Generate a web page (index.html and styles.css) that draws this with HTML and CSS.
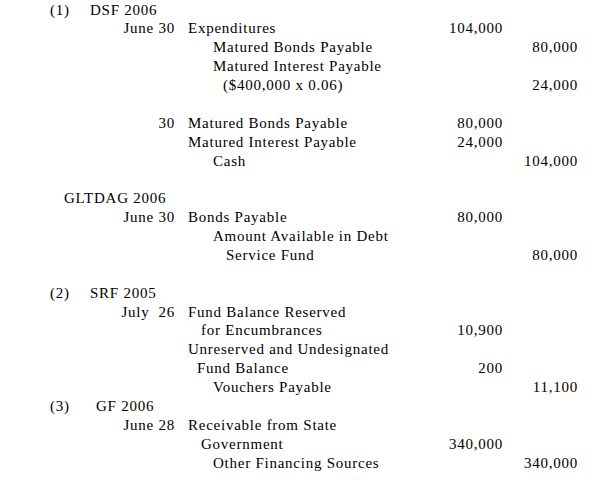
FILE: index.html
```html
<!DOCTYPE html>
<html>
<head>
<meta charset="utf-8">
<link rel="stylesheet" href="styles.css">
</head>
<body>
<div class="journal">
  <div class="head"><span class="no">(1)</span><span class="title">DSF 2006</span></div>
  <div class="row"><span class="date">June 30</span><span class="acct">Expenditures</span><span class="dr">104,000</span><span class="cr"></span></div>
  <div class="row"><span class="date"></span><span class="acct i2">Matured Bonds Payable</span><span class="dr"></span><span class="cr">80,000</span></div>
  <div class="row"><span class="date"></span><span class="acct i2">Matured Interest Payable</span><span class="dr"></span><span class="cr"></span></div>
  <div class="row"><span class="date"></span><span class="acct i2b">($400,000 x 0.06)</span><span class="dr"></span><span class="cr">24,000</span></div>
  <div class="blank"></div>
  <div class="row"><span class="date">30</span><span class="acct">Matured Bonds Payable</span><span class="dr">80,000</span><span class="cr"></span></div>
  <div class="row"><span class="date"></span><span class="acct">Matured Interest Payable</span><span class="dr">24,000</span><span class="cr"></span></div>
  <div class="row"><span class="date"></span><span class="acct i2">Cash</span><span class="dr"></span><span class="cr">104,000</span></div>
  <div class="blank"></div>
  <div class="head"><span class="title wide">GLTDAG 2006</span></div>
  <div class="row"><span class="date">June 30</span><span class="acct">Bonds Payable</span><span class="dr">80,000</span><span class="cr"></span></div>
  <div class="row"><span class="date"></span><span class="acct i2">Amount Available in Debt</span><span class="dr"></span><span class="cr"></span></div>
  <div class="row"><span class="date"></span><span class="acct i3">Service Fund</span><span class="dr"></span><span class="cr">80,000</span></div>
  <div class="blank"></div>
  <div class="head"><span class="no">(2)</span><span class="title">SRF 2005</span></div>
  <div class="row"><span class="date">July&nbsp;&nbsp;26</span><span class="acct">Fund Balance Reserved</span><span class="dr"></span><span class="cr"></span></div>
  <div class="row"><span class="date"></span><span class="acct i1">for Encumbrances</span><span class="dr">10,900</span><span class="cr"></span></div>
  <div class="row"><span class="date"></span><span class="acct">Unreserved and Undesignated</span><span class="dr"></span><span class="cr"></span></div>
  <div class="row"><span class="date"></span><span class="acct i1a">Fund Balance</span><span class="dr">200</span><span class="cr"></span></div>
  <div class="row"><span class="date"></span><span class="acct i2">Vouchers Payable</span><span class="dr"></span><span class="cr">11,100</span></div>
  <div class="head"><span class="no">(3)</span><span class="title shift">GF 2006</span></div>
  <div class="row"><span class="date">June 28</span><span class="acct">Receivable from State</span><span class="dr"></span><span class="cr"></span></div>
  <div class="row"><span class="date"></span><span class="acct i1">Government</span><span class="dr">340,000</span><span class="cr"></span></div>
  <div class="row"><span class="date"></span><span class="acct i2">Other Financing Sources</span><span class="dr"></span><span class="cr">340,000</span></div>
</div>
</body>
</html>
```
FILE: styles.css
```css
html, body {
  margin: 0;
  padding: 0;
  background: #ffffff;
}
body {
  font-family: "Liberation Serif", "Times New Roman", serif;
  font-size: 15px;
  letter-spacing: 0.75px;
  color: #000000;
}
.journal {
  padding-top: 0.5px;
  display: flex;
  flex-direction: column;
}
.head, .row, .blank {
  height: 18.875px;
  line-height: 18.875px;
  white-space: nowrap;
}
.head {
  display: flex;
  padding-left: 50px;
}
.head .no {
  width: 40px;
}
.head .title.wide {
  padding-left: 14px;
}
.head .title.shift {
  padding-left: 6px;
}
.row {
  display: grid;
  grid-template-columns: 175px 240px 88px 75px;
  column-gap: 0;
}
.date {
  text-align: right;
}
.acct {
  padding-left: 13px;
}
.acct.i1 { padding-left: 26px; }
.acct.i1a { padding-left: 22px; }
.acct.i2 { padding-left: 38px; }
.acct.i2b { padding-left: 48px; }
.acct.i3 { padding-left: 51px; }
.dr, .cr {
  text-align: right;
}
```
